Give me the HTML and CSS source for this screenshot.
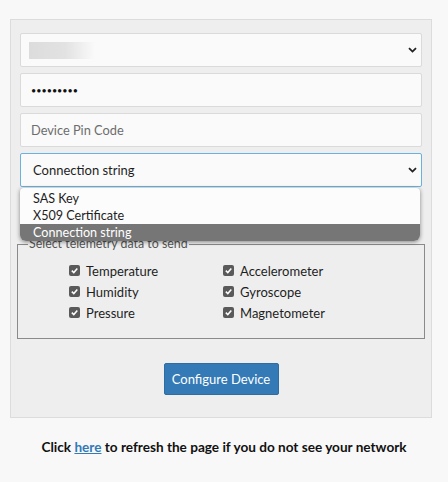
FILE: index.html
```html
<!DOCTYPE html>
<html>
<head>
<meta charset="utf-8">
<link rel="stylesheet" href="styles.css">
</head>
<body>
<div class="panel">
  <div class="field select">
    <span class="redacted"></span>
    <svg class="chev" width="9" height="6" viewBox="0 0 9 6"><path d="M1 1.2 L4.5 4.6 L8 1.2" fill="none" stroke="#222" stroke-width="1.8"/></svg>
  </div>
  <div class="field"><span class="dots">•••••••••</span></div>
  <div class="field"><span class="placeholder">Device Pin Code</span></div>
  <div class="select-wrap">
    <div class="field select focus">
      <span class="value">Connection string</span>
      <svg class="chev" width="9" height="6" viewBox="0 0 9 6"><path d="M1 1.2 L4.5 4.6 L8 1.2" fill="none" stroke="#222" stroke-width="1.8"/></svg>
    </div>
    <ul class="menu">
      <li>SAS Key</li>
      <li>X509 Certificate</li>
      <li class="sel">Connection string</li>
    </ul>
  </div>
  <fieldset class="telemetry">
    <legend>Select telemetry data to send</legend>
    <div class="checks">
      <label class="check"><span class="box"><svg width="9" height="9" viewBox="0 0 9 9"><path d="M1.8 4.6 L3.8 6.6 L7.3 2.4" fill="none" stroke="#fff" stroke-width="1.5"/></svg></span>Temperature</label>
      <label class="check"><span class="box"><svg width="9" height="9" viewBox="0 0 9 9"><path d="M1.8 4.6 L3.8 6.6 L7.3 2.4" fill="none" stroke="#fff" stroke-width="1.5"/></svg></span>Accelerometer</label>
      <label class="check"><span class="box"><svg width="9" height="9" viewBox="0 0 9 9"><path d="M1.8 4.6 L3.8 6.6 L7.3 2.4" fill="none" stroke="#fff" stroke-width="1.5"/></svg></span>Humidity</label>
      <label class="check"><span class="box"><svg width="9" height="9" viewBox="0 0 9 9"><path d="M1.8 4.6 L3.8 6.6 L7.3 2.4" fill="none" stroke="#fff" stroke-width="1.5"/></svg></span>Gyroscope</label>
      <label class="check"><span class="box"><svg width="9" height="9" viewBox="0 0 9 9"><path d="M1.8 4.6 L3.8 6.6 L7.3 2.4" fill="none" stroke="#fff" stroke-width="1.5"/></svg></span>Pressure</label>
      <label class="check"><span class="box"><svg width="9" height="9" viewBox="0 0 9 9"><path d="M1.8 4.6 L3.8 6.6 L7.3 2.4" fill="none" stroke="#fff" stroke-width="1.5"/></svg></span>Magnetometer</label>
    </div>
  </fieldset>
  <div class="actions"><button class="btn">Configure Device</button></div>
</div>
<p class="note">Click <a href="#">here</a> to refresh the page if you do not see your network</p>
</body>
</html>
```
FILE: styles.css
```css
html, body {
  margin: 0;
  padding: 0;
  background: #f8f8f8;
  font-family: Lato, "Noto Sans", sans-serif;
  color: #222;
}
.panel {
  margin: 19px 0 0 10px;
  width: 402px;
  padding: 13px 9px 22px 9px;
  background: #eeeeee;
  border: 1px solid #dcdcdc;
  display: flex;
  flex-direction: column;
  gap: 6px;
}
.field {
  height: 32px;
  border: 1px solid #dadada;
  border-radius: 2px;
  background: #fafafa;
  display: flex;
  align-items: center;
  padding: 0 10px;
  font-size: 13px;
  position: relative;
}
.select { justify-content: space-between; padding-left: 8px; padding-right: 4px; }
.focus { border-color: #6bb1e0; }
.redacted {
  width: 66px;
  height: 17px;
  background: linear-gradient(90deg, #dcdcdc 0%, #e2e2e2 55%, #fafafa 100%);
}
.dots { font-size: 9px; letter-spacing: 0; color: #111; }
.placeholder { color: #6d6d6d; font-size: 12.8px; }
.value { color: #1e1e1e; padding-left: 4px; font-size: 13px; }
.select-wrap { position: relative; }
.menu {
  position: absolute;
  left: 0;
  top: 35px;
  width: 400px;
  margin: 0;
  padding: 2px 0 0;
  list-style: none;
  background: #fcfcfc;
  border-radius: 4px 4px 6px 6px;
  box-shadow: 0 1px 4px rgba(0,0,0,0.45);
  overflow: hidden;
  z-index: 2;
  font-size: 12.6px;
}
.menu li {
  height: 17px;
  line-height: 17px;
  padding-left: 13px;
  color: #1e1e1e;
}
.menu li.sel { background: #767676; color: #fff; }
.telemetry {
  margin: 44px -3px 0 -3px;
  padding: 0 10px 17px;
  border: 1px solid #8a8a8a;
  min-width: 0;
}
.telemetry legend {
  font-size: 12.4px;
  color: #555;
  padding: 0 1px;
  line-height: 14px;
}
.checks {
  display: grid;
  grid-template-columns: 154px 154px;
  row-gap: 4px;
  padding: 11px 0 0 41px;
}
.check {
  display: flex;
  align-items: center;
  gap: 6px;
  font-size: 13px;
  color: #1e1e1e;
  height: 17px;
}
.box {
  width: 11px;
  height: 11px;
  border-radius: 2px;
  background: #5a5a5a;
  display: flex;
  align-items: center;
  justify-content: center;
}
.actions {
  display: flex;
  justify-content: center;
  margin-top: 18px;
}
.btn {
  width: 115px;
  height: 32px;
  background: #337ab7;
  color: #fff;
  border: 1px solid #2e6da4;
  border-radius: 2px;
  font-family: Lato, "Noto Sans", sans-serif;
  font-size: 13px;
  padding: 0;
}
.note {
  margin: 21px 0 0;
  text-align: center;
  font-weight: bold;
  font-size: 13.6px;
  color: #111;
}
.note a { color: #337ab7; text-decoration: underline; }
```
